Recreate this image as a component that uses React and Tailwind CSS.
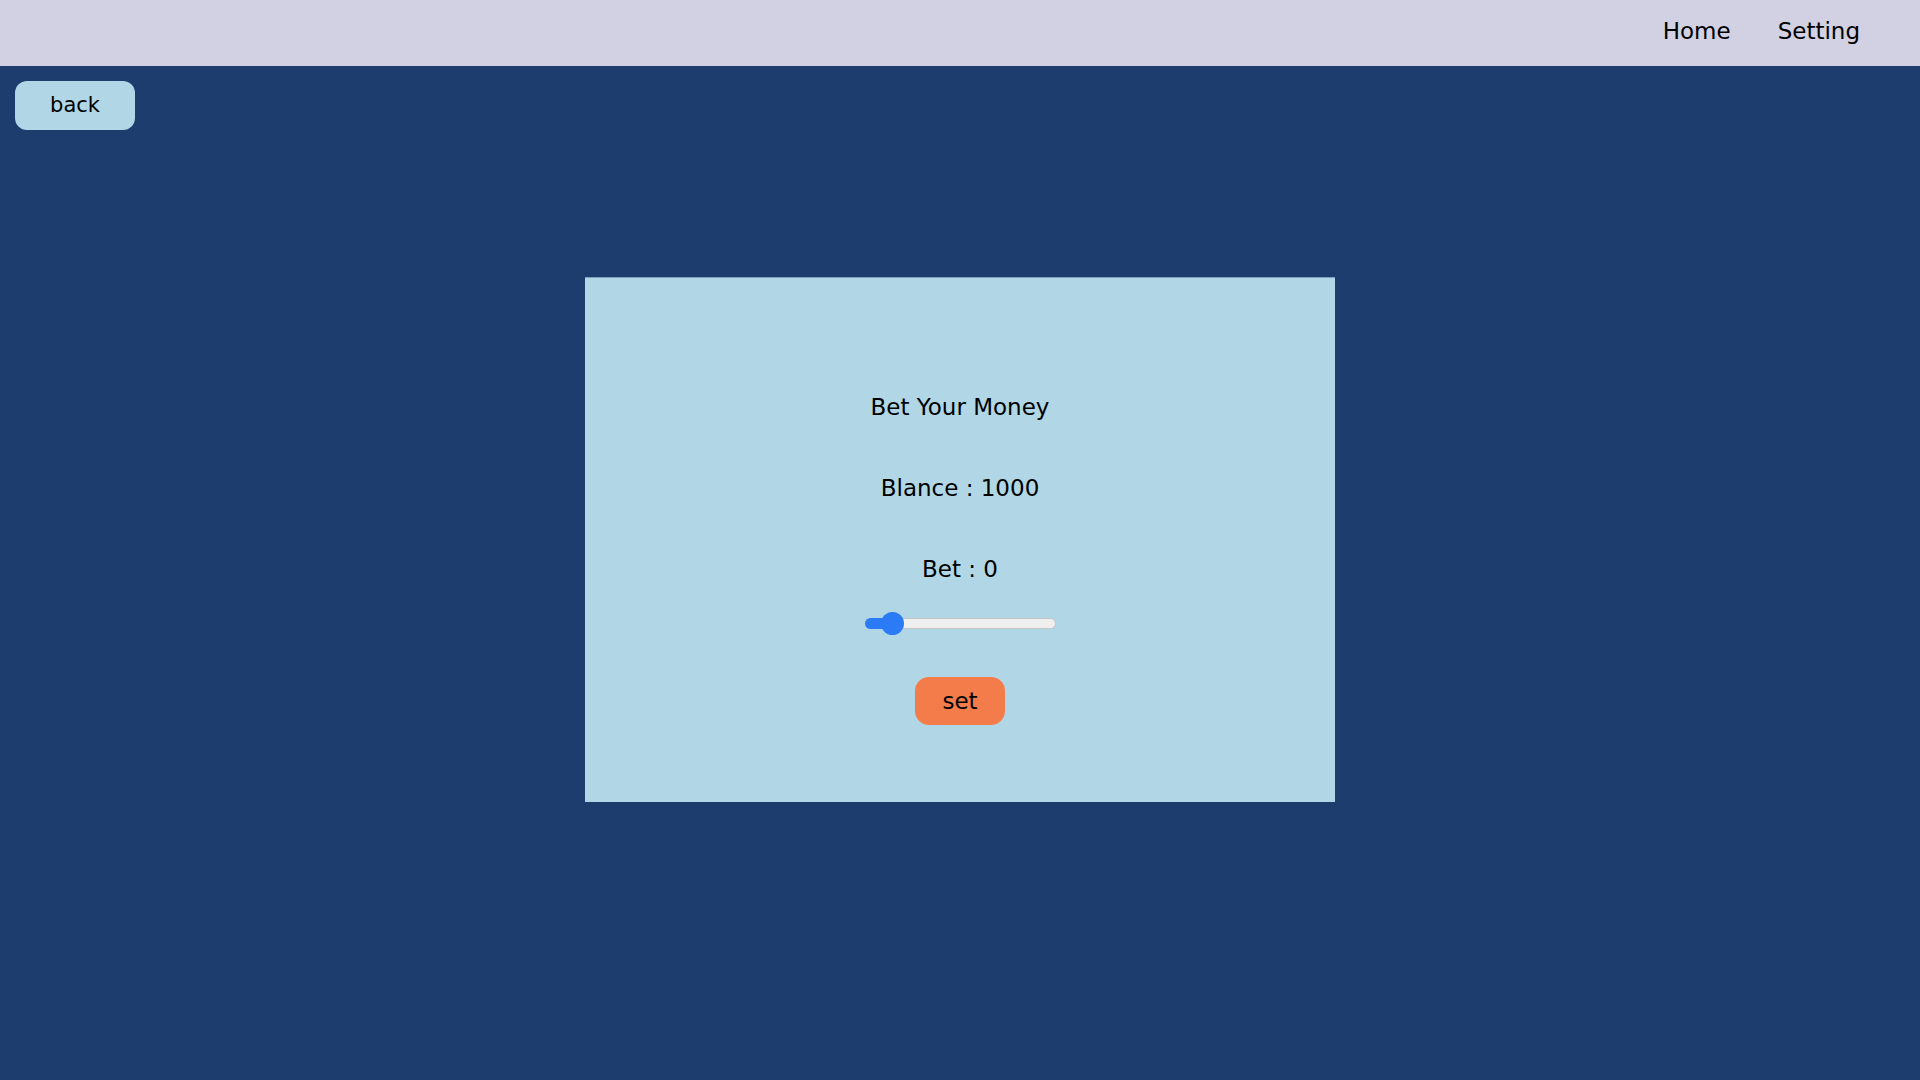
export default function App() {
  const font = { fontFamily: '"DejaVu Sans", Verdana, sans-serif' };
  return (
    <div className="min-h-screen w-full bg-[#1c3d6d] flex flex-col" style={font}>
      <header className="h-[66px] bg-[#d1d1e3] flex items-center justify-end pr-[60px] pb-[5px] gap-[47px] text-[23px] leading-[32px] text-black">
        <span>Home</span>
        <span>Setting</span>
      </header>
      <div className="px-[15px] pt-[15px]">
        <button className="w-[120px] h-[49px] rounded-[12px] bg-[#b1d7e6] text-[21px] text-black">back</button>
      </div>
      <div className="flex justify-center pt-[147px]">
        <div className="w-[750px] h-[525px] bg-[#b1d7e6] border-t border-[#7f9fbf] flex flex-col items-center pt-[113px] text-[23px] leading-[32px] text-black">
          <div>Bet Your Money</div>
          <div className="mt-[49px]">Blance : 1000</div>
          <div className="mt-[49px]">Bet : 0</div>
          <div className="mt-[26px] relative w-[191px] h-[24px] flex items-center">
            <div className="w-full h-[11px] rounded-full bg-[#efefef] border border-[#c4c4c4]"></div>
            <div className="absolute left-0 h-[11px] w-[32px] rounded-full bg-[#2a7bf5]"></div>
            <div className="absolute left-[16px] w-[23px] h-[23px] rounded-full bg-[#2a7bf5]"></div>
          </div>
          <button className="mt-[42px] w-[90px] h-[48px] rounded-[14px] bg-[#f47c4a] text-[23px] text-black">set</button>
        </div>
      </div>
    </div>
  );
}
